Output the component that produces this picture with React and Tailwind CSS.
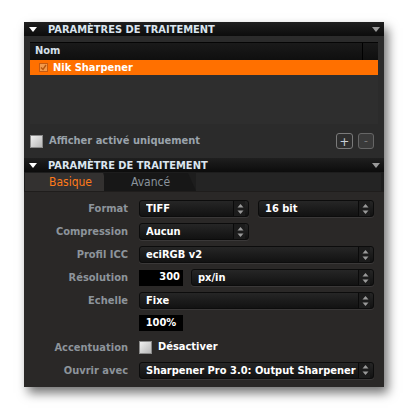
import React from 'react'

const font = { fontFamily: '"DejaVu Sans Condensed", "DejaVu Sans", Verdana, sans-serif' }

function Arrows() {
  return (
    <svg width="7" height="12" viewBox="0 0 7 12" className="shrink-0">
      <path d="M3.5 1 L6.5 4.5 L0.5 4.5 Z" fill="#9a9a9a" />
      <path d="M3.5 11 L6.5 7.5 L0.5 7.5 Z" fill="#9a9a9a" />
    </svg>
  )
}

function Select({ value, className = '' }) {
  return (
    <div
      className={`flex h-[17px] items-center rounded-[3px] border border-[#0c0c0c] bg-gradient-to-b from-[#262626] to-[#121212] pl-[6px] pr-[3px] shadow-[0_1px_0_#3a3838] ${className}`}
    >
      <span className="flex-1 truncate text-[11px] font-bold leading-none text-white">{value}</span>
      <div className="flex h-full items-center border-l border-[#0a0a0a] bg-[#1c1c1c] pl-[3px] pr-[1px]">
        <Arrows />
      </div>
    </div>
  )
}

function Header({ title }) {
  return (
    <div className="flex h-[14px] items-center bg-gradient-to-b from-[#1f1f1f] to-[#0c0c0c] pl-[5px] pr-[4px]">
      <svg width="8" height="5" viewBox="0 0 8 5">
        <path d="M0 0 L8 0 L4 5 Z" fill="#ffffff" />
      </svg>
      <span className="ml-[11px] flex-1 text-[11px] font-bold leading-none text-[#dbe5ef]">
        {title}
      </span>
      <svg width="8" height="5" viewBox="0 0 8 5">
        <path d="M0 0 L8 0 L4 5 Z" fill="#9a9a9a" />
      </svg>
    </div>
  )
}

function Label({ children }) {
  return (
    <div className="text-right text-[11px] font-bold leading-none text-[#8d949b]">{children}</div>
  )
}

export default function App() {
  return (
    <div className="h-[414px] w-[406px] bg-white pl-[24px] pt-[22px]" style={font}>
      <div className="flex h-[365px] w-[360px] flex-col bg-[#2a2827] shadow-[4px_6px_10px_rgba(0,0,0,0.55)]">
        <Header title="PARAMÈTRES DE TRAITEMENT" />

        {/* liste des traitements */}
        <div className="bg-[#2b2b2b] px-[6px] pt-[6px]">
          <div className="h-[82px] bg-[#2e2e2e]">
            <div className="flex h-[18px] border-t border-[#050505] bg-gradient-to-b from-[#1a1a1a] to-[#0f0f0f]">
              <div className="flex flex-1 items-center border-r border-[#000] pl-[5px] text-[11px] font-bold text-[#d6e0ea]">
                Nom
              </div>
              <div className="w-[15px]" />
            </div>
            <div className="flex h-[15px] items-center bg-[#ff7000] pl-[9px]">
              <div className="flex h-[9px] w-[9px] items-center justify-center border border-[#c65a10] bg-[#f29a4c]">
                <svg width="7" height="7" viewBox="0 0 7 7">
                  <path d="M1 3.5 L3 5.5 L6 1" stroke="#b8560c" strokeWidth="1.4" fill="none" />
                </svg>
              </div>
              <span className="ml-[5px] text-[11px] font-bold leading-none text-white">Nik Sharpener</span>
            </div>
          </div>
        </div>

        <div className="flex h-[34px] items-center bg-[#2b2b2b] pl-[6px] pr-[10px]">
          <div className="h-[13px] w-[13px] border border-[#8a8a8a] bg-gradient-to-br from-[#f0f0f0] to-[#b8b8b8]" />
          <span className="ml-[6px] flex-1 text-[11px] font-bold text-[#9aa3ab]">Afficher activé uniquement</span>
          <div className="flex h-[16px] w-[17px] items-center justify-center rounded-[3px] border border-[#7a7a7a] bg-[#2e2e2e] text-[13px] leading-none text-[#c8d0d8]">
            +
          </div>
          <div className="ml-[5px] flex h-[16px] w-[16px] items-center justify-center rounded-[3px] border border-[#666] bg-[#3a3a3a] text-[12px] leading-none text-[#777]">
            -
          </div>
        </div>

        <Header title="PARAMÈTRE DE TRAITEMENT" />

        {/* onglets */}
        <div className="flex h-[20px] items-end border-b border-[#1f1d1c] bg-[#1d1d1d] pl-[1px] pr-[3px]">
          <div className="flex h-[18px] w-[84px] items-center bg-[#333130] pl-[24px] text-[12px] text-[#ff7a1a] [clip-path:polygon(0_0,78px_0,100%_100%,0_100%)]">
            Basique
          </div>
          <div className="-ml-[5px] flex h-[18px] w-[92px] items-center bg-[#171717] pl-[27px] text-[12px] text-[#8a949c] [clip-path:polygon(0_0,84px_0,100%_100%,0_100%)]">
            Avancé
          </div>
          <div className="h-[18px] flex-1 bg-[#242424]" />
        </div>

        {/* formulaire */}
        <div className="grid grid-cols-[104px_1fr] items-center gap-x-[11px] gap-y-[6px] pr-[10px] pt-[8px]">
          <Label>Format</Label>
          <div className="flex gap-[9px]">
            <Select value="TIFF" className="w-[110px]" />
            <Select value="16 bit" className="flex-1" />
          </div>

          <Label>Compression</Label>
          <Select value="Aucun" className="w-[110px]" />

          <Label>Profil ICC</Label>
          <Select value="eciRGB v2" />

          <Label>Résolution</Label>
          <div className="flex items-center gap-[8px]">
            <div className="flex h-[16px] w-[44px] items-center justify-end bg-black pr-[3px] text-[11px] font-bold text-white">
              300
            </div>
            <Select value="px/in" className="flex-1" />
          </div>

          <Label>Echelle</Label>
          <Select value="Fixe" />

          <div />
          <div className="flex h-[16px] w-[44px] items-center justify-center bg-black text-[11px] font-bold text-white">
            100%
          </div>

          <div className="pt-[2px]">
            <Label>Accentuation</Label>
          </div>
          <div className="flex items-center pt-[2px]">
            <div className="h-[13px] w-[13px] border border-[#8a8a8a] bg-gradient-to-br from-[#f0f0f0] to-[#b8b8b8]" />
            <span className="ml-[6px] text-[11px] font-bold text-white">Désactiver</span>
          </div>

          <Label>Ouvrir avec</Label>
          <Select value="Sharpener Pro 3.0: Output Sharpener" />
        </div>
      </div>
    </div>
  )
}
